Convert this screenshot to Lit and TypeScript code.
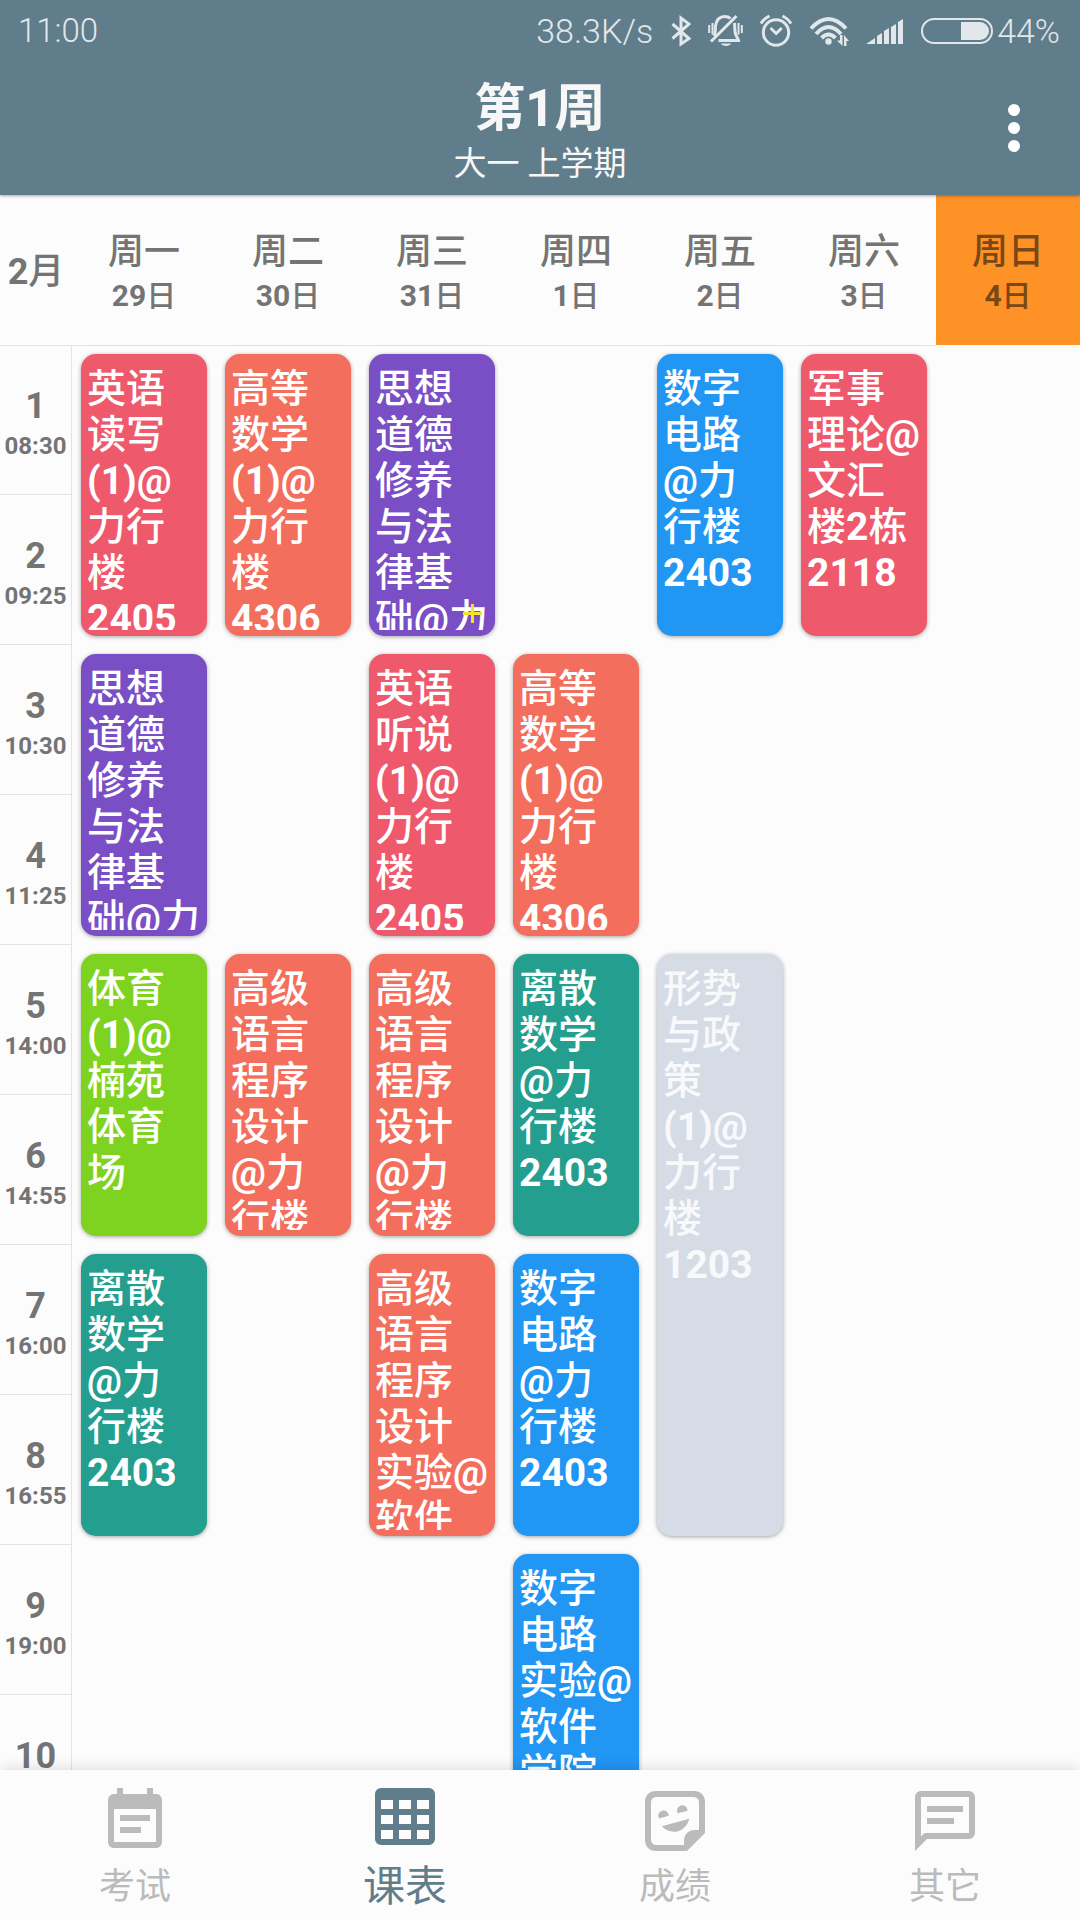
import { LitElement, html, css, svg, nothing } from "lit";
import { customElement, state } from "lit/decorators.js";
import { classMap } from "lit/directives/class-map.js";
import { styleMap } from "lit/directives/style-map.js";

interface Course {
  day: number;
  start: number;
  span: number;
  tone: string;
  text: string;
  more?: boolean;
}

const DAYS = [
  ["周一", "29日"],
  ["周二", "30日"],
  ["周三", "31日"],
  ["周四", "1日"],
  ["周五", "2日"],
  ["周六", "3日"],
  ["周日", "4日"],
];
const TODAY = 6;

const TIMES = ["08:30", "09:25", "10:30", "11:25", "14:00", "14:55", "16:00", "16:55", "19:00", ""];

const COURSES: Course[] = [
  { day: 0, start: 1, span: 2, tone: "rose", text: "英语\n读写\n(1)@\n力行\n楼\n2405" },
  { day: 1, start: 1, span: 2, tone: "coral", text: "高等\n数学\n(1)@\n力行\n楼\n4306" },
  { day: 2, start: 1, span: 2, tone: "violet", text: "思想\n道德\n修养\n与法\n律基\n础@力", more: true },
  { day: 4, start: 1, span: 2, tone: "blue", text: "数字\n电路\n@力\n行楼\n2403" },
  { day: 5, start: 1, span: 2, tone: "rose", text: "军事\n理论@\n文汇\n楼2栋\n2118" },
  { day: 0, start: 3, span: 2, tone: "violet", text: "思想\n道德\n修养\n与法\n律基\n础@力" },
  { day: 2, start: 3, span: 2, tone: "rose", text: "英语\n听说\n(1)@\n力行\n楼\n2405" },
  { day: 3, start: 3, span: 2, tone: "coral", text: "高等\n数学\n(1)@\n力行\n楼\n4306" },
  { day: 0, start: 5, span: 2, tone: "green", text: "体育\n(1)@\n楠苑\n体育\n场" },
  { day: 1, start: 5, span: 2, tone: "coral", text: "高级\n语言\n程序\n设计\n@力\n行楼" },
  { day: 2, start: 5, span: 2, tone: "coral", text: "高级\n语言\n程序\n设计\n@力\n行楼" },
  { day: 3, start: 5, span: 2, tone: "teal", text: "离散\n数学\n@力\n行楼\n2403" },
  { day: 4, start: 5, span: 4, tone: "muted", text: "形势\n与政\n策\n(1)@\n力行\n楼\n1203" },
  { day: 0, start: 7, span: 2, tone: "teal", text: "离散\n数学\n@力\n行楼\n2403" },
  { day: 2, start: 7, span: 2, tone: "coral", text: "高级\n语言\n程序\n设计\n实验@\n软件" },
  { day: 3, start: 7, span: 2, tone: "blue", text: "数字\n电路\n@力\n行楼\n2403" },
  { day: 3, start: 9, span: 2, tone: "blue", text: "数字\n电路\n实验@\n软件\n学院" },
];

const TABS = [
  {
    label: "考试",
    icon: svg`<path d="M19 3h-1V1h-2v2H8V1H6v2H5c-1.1 0-2 .9-2 2v14c0 1.1.9 2 2 2h14c1.1 0 2-.9 2-2V5c0-1.1-.9-2-2-2zm0 16H5V8h14zM17 10H7v2h10zm-3 4H7v2h7z"/>`,
  },
  {
    label: "课表",
    icon: svg`<path fill-rule="evenodd" d="M4 1h16a2 2 0 0 1 2 2v15a2 2 0 0 1-2 2H4a2 2 0 0 1-2-2V3a2 2 0 0 1 2-2zM4 5v3h4V5zm6 0v3h4V5zm6 0v3h4V5zM4 10v3h4v-3zm6 0v3h4v-3zm6 0v3h4v-3zM4 15v3h4v-3zm6 0v3h4v-3zm6 0v3h4v-3z"/>`,
  },
  {
    label: "成绩",
    icon: svg`<path fill-rule="evenodd" d="M5.5 2C3.56 2 2 3.56 2 5.5v13C2 20.44 3.56 22 5.5 22H16l6-6V5.5C22 3.56 20.44 2 18.5 2zM5.75 4h12.5A1.75 1.75 0 0 1 20 5.75V15h-1.5c-1.94 0-3.5 1.56-3.5 3.5V20H5.75A1.75 1.75 0 0 1 4 18.25V5.75A1.75 1.75 0 0 1 5.75 4z"/><path d="M14.44 6.77c-.16 0-.32.02-.47.06-.94.26-1.47 1.22-1.23 2.17.05.15.12.3.21.44l3.23-.88c0-.17-.02-.34-.06-.51-.21-.75-.9-1.28-1.68-1.28zM8.17 8.5c-.17 0-.32 0-.47.05-.93.26-1.48 1.22-1.23 2.15.03.16.12.3.21.46l3.23-.88c0-.17-.02-.34-.06-.5-.21-.78-.9-1.28-1.68-1.28zM16.72 11.26l-9.13 2.51c1.32 1.53 3.41 2.17 5.36 1.64 1.95-.54 3.41-2.16 3.77-4.15z"/>`,
  },
  {
    label: "其它",
    icon: svg`<path fill-rule="evenodd" d="M20 2a2 2 0 0 1 2 2v12a2 2 0 0 1-2 2H6l-4 4V4c0-1.1.9-2 2-2zM4 4v13.17L5.17 16H20V4zM6 7h12v2H6zM6 11h9v2H6z"/>`,
  },
];

/** Sets runs of Latin letters and digits in bold beside medium-weight Chinese. */
const mixed = (text: string) =>
  text
    .split(/([!-~]+)/)
    .filter(Boolean)
    .map((run) => (/[!-~]/.test(run) ? html`<b>${run}</b>` : run));

@customElement("status-bar")
class StatusBar extends LitElement {
  static styles = css`
    :host {
      display: flex;
      align-items: center;
      box-sizing: border-box;
      height: 60px;
      padding: 1px 20px 0 18px;
      color: #e1e7ea;
      font-size: 34px;
      font-weight: 300;
    }
    .clock {
      flex: 1;
      font-size: 33px;
    }
    .icons {
      display: flex;
      align-items: center;
      gap: 17px;
      margin: 0 4px 0 18px;
    }
    svg {
      display: block;
      height: 32px;
      fill: none;
      stroke: currentColor;
    }
    .solid {
      fill: currentColor;
      stroke: none;
    }
  `;

  render() {
    return html`
      <span class="clock">11:00</span>
      <span>38.3K/s</span>
      <span class="icons">
        <svg width="20" viewBox="0 0 20 32" stroke-width="3" aria-hidden="true">
          <path d="M1.500 9L18 23.500 10 29V3l8 6L1.500 23.500" />
        </svg>
        <svg width="35" viewBox="0 0 35 32" stroke-width="3" aria-hidden="true">
          <path d="M3 26.500L28.500 1M6 21c2-4 1-6 1.500-10C8.500 5 12 1.500 16.500 1.500c2.500 0 4.500.5 6 2M26.500 8c.5 4 0 8 1 11 .8 2.500 2.500 4 3 6.500H10.500" />
          <path d="M1.200 10v8M4.500 8v11.500M30.500 8v11.500M33.800 10v8" stroke-width="2" />
          <path class="solid" d="M12.500 28.500h11c-1.500 1.500-3 2.500-5.500 2.500s-4-1-5.500-2.500z" />
        </svg>
        <svg width="32" viewBox="0 0 32 32" stroke-width="3" aria-hidden="true">
          <circle cx="16" cy="17.500" r="12.700" />
          <path d="M10.500 13l5.700 5.500 5.500-5.500M1 8.500C3 5 5.500 3 9.500 1M31 8.500C29 5 26.500 3 22.500 1" />
        </svg>
        <svg width="40" viewBox="0 0 40 32" stroke-width="4" aria-hidden="true">
          <path d="M2 13.500Q19.500-5.500 37 13.500M7 19Q19.500 5 32 19M12.500 23Q19.500 16 26.500 23" />
          <circle class="solid" cx="19.500" cy="26.500" r="3.200" />
          <path class="solid" d="M31 20h2.500v11L28 25.500h3zM35 31h2.500v-5H40L35 20z" />
        </svg>
        <svg width="38" viewBox="0 0 38 32" aria-hidden="true">
          <path class="solid" d="M0 29l9-6v6zM11 21l5-3v11h-5zM18 16l5-3v16h-5zM25 12l5-3v20h-5zM32 7l5-3v25h-5z" />
        </svg>
        <svg width="72" viewBox="0 0 72 32" stroke-width="2" aria-hidden="true">
          <rect x="1" y="4" width="70" height="24" rx="12" />
          <path class="solid" d="M40 7h19a9 9 0 0 1 0 18H40z" />
        </svg>
      </span>
      <span>44%</span>
    `;
  }
}

@customElement("app-root")
class AppRoot extends LitElement {
  @state() private tab = 1;

  static styles = css`
    :host {
      display: flex;
      flex-direction: column;
      height: 100vh;
      overflow: hidden;
      background: #fcfcfc;
      color: #747474;
      font-family: Roboto, "Noto Sans CJK SC", sans-serif;
    }
    button {
      border: 0;
      padding: 0;
      background: none;
      color: inherit;
      font: inherit;
      cursor: pointer;
    }
    b {
      font-weight: 700;
    }
    .top {
      position: relative;
      z-index: 1;
      background: #607d8b;
      color: #f7f7f7;
      box-shadow: 0 1px 3px rgba(0, 0, 0, 0.35);
    }
    .toolbar {
      display: grid;
      grid-template-columns: 1fr auto 1fr;
      align-items: center;
      height: 135px;
      padding: 0 30px;
    }
    .heading {
      grid-column: 2;
      text-align: center;
      padding-top: 8px;
    }
    .title {
      margin: 0;
      font-size: 51px;
      line-height: 60px;
      font-weight: 700;
    }
    .term {
      margin: 5px 0 0;
      font-size: 33px;
      line-height: 40px;
    }
    .menu {
      justify-self: end;
      width: 72px;
      height: 72px;
      color: #fff;
    }
    .menu svg {
      display: block;
      fill: currentColor;
    }
    .board {
      flex: 1;
      min-height: 0;
      overflow: hidden;
    }
    table {
      width: 100%;
      table-layout: fixed;
      border-collapse: separate;
      border-spacing: 0;
    }
    .rail {
      width: 72px;
    }
    th,
    td {
      box-sizing: border-box;
      height: 150px;
      padding: 0;
    }
    thead th {
      padding-top: 3px;
      box-shadow: 0 1px #e3e3e3;
      font-size: 36px;
      line-height: 42px;
      font-weight: 500;
    }
    .weekday,
    .date {
      display: block;
    }
    .date {
      margin-top: 5px;
      font-size: 30px;
      line-height: 35px;
    }
    thead .today {
      background: #ff9226;
      box-shadow: none;
      color: #7a4716;
    }
    .slot {
      vertical-align: top;
      padding-top: 40px;
      border-right: 1px solid #e3e3e3;
      border-bottom: 1px solid #e3e3e3;
      font-weight: 700;
    }
    .number,
    .time {
      display: block;
      text-align: center;
    }
    .number {
      font-size: 36px;
      line-height: 42px;
    }
    .time {
      margin-top: 5px;
      font-size: 24px;
      line-height: 28px;
    }
    .lesson {
      padding: 9px;
    }
    .card {
      position: relative;
      display: flex;
      box-sizing: border-box;
      width: 100%;
      padding: 6px;
      border-radius: 15px;
      box-shadow: 0 1px 4px rgba(0, 0, 0, 0.35);
      color: #fff;
      font-size: 39px;
      line-height: 46px;
      font-weight: 500;
      text-align: left;
      white-space: pre;
    }
    .name {
      align-self: stretch;
      width: 100%;
      box-sizing: border-box;
      padding-top: 6px;
      overflow: hidden;
    }
    .rose { background: #ee596c; }
    .coral { background: #f36e5c; }
    .violet { background: #7a4ec4; }
    .blue { background: #2196f3; }
    .green { background: #7ed321; }
    .teal { background: #249e8e; }
    .muted {
      background: #d6dce6;
      color: #f8f9fb;
    }
    .plus {
      position: absolute;
      right: 13px;
      bottom: 13px;
      display: block;
      fill: #f7e22b;
    }
    .tabs {
      position: relative;
      z-index: 1;
      display: grid;
      grid-template-columns: repeat(4, 1fr);
      height: 150px;
      background: #fcfcfc;
      box-shadow: 0 -2px 12px rgba(0, 0, 0, 0.12);
    }
    .tab {
      display: flex;
      flex-direction: column;
      align-items: center;
      padding-top: 15px;
      color: #bbb;
      font-size: 36px;
      line-height: 60px;
    }
    .tab svg {
      flex: none;
      fill: currentColor;
    }
    .active {
      color: #607d8b;
      font-size: 42px;
    }
  `;

  private cell(day: number, period: number) {
    const course = COURSES.find((c) => c.day === day && c.start === period);
    if (course) {
      const height = `${course.span * 150 - 18}px`;
      return html`<td class="lesson" rowspan=${course.span}>
        <button class=${`card ${course.tone}`} style=${styleMap({ height })}><span class="name">${mixed(course.text)}</span>${course.more
          ? html`<svg class="plus" width="19" height="19" viewBox="0 0 19 19" aria-hidden="true"><path d="M8 0h3v8h8v3h-8v8H8v-8H0V8h8z" /></svg>`
          : nothing}</button>
      </td>`;
    }
    const covered = COURSES.some((c) => c.day === day && c.start < period && period < c.start + c.span);
    return covered ? nothing : html`<td></td>`;
  }

  render() {
    return html`
      <header class="top">
        <status-bar></status-bar>
        <div class="toolbar">
          <div class="heading">
            <h1 class="title">第1周</h1>
            <p class="term">大一 上学期</p>
          </div>
          <button class="menu" aria-label="菜单">
            <svg width="72" height="72" viewBox="0 0 72 72" aria-hidden="true">
              <circle cx="36" cy="18" r="6" />
              <circle cx="36" cy="36" r="6" />
              <circle cx="36" cy="54" r="6" />
            </svg>
          </button>
        </div>
      </header>
      <main class="board">
        <table>
          <thead>
            <tr>
              <th class="rail" scope="col">${mixed("2月")}</th>
              ${DAYS.map(
                ([name, date], i) => html`<th scope="col" class=${classMap({ today: i === TODAY })}>
                  <span class="weekday">${name}</span><span class="date">${mixed(date)}</span>
                </th>`
              )}
            </tr>
          </thead>
          <tbody>
            ${TIMES.map(
              (time, i) => html`<tr>
                <th class="slot" scope="row">
                  <span class="number">${i + 1}</span>
                  ${time ? html`<span class="time">${time}</span>` : nothing}
                </th>
                ${DAYS.map((_, day) => this.cell(day, i + 1))}
              </tr>`
            )}
          </tbody>
        </table>
      </main>
      <nav class="tabs">
        ${TABS.map(
          (t, i) => html`<button
            class=${classMap({ tab: true, active: i === this.tab })}
            @click=${() => (this.tab = i)}
          >
            <svg width="72" height="72" viewBox="0 0 24 24" aria-hidden="true">${t.icon}</svg>
            <span>${t.label}</span>
          </button>`
        )}
      </nav>
    `;
  }
}
